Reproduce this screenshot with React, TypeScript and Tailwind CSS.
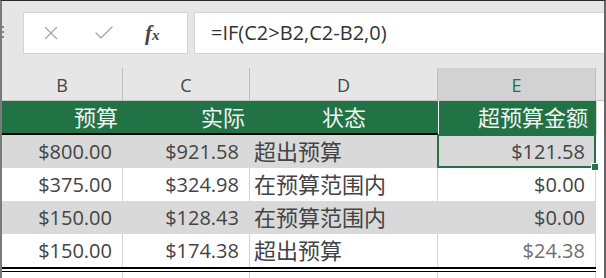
import React from 'react';
import { X, Check } from 'lucide-react';

type Row = { budget: string; actual: string; status: string; over: string };

const rows: Row[] = [
    { budget: '$800.00', actual: '$921.58', status: '超出预算', over: '$121.58' },
    { budget: '$375.00', actual: '$324.98', status: '在预算范围内', over: '$0.00' },
    { budget: '$150.00', actual: '$128.43', status: '在预算范围内', over: '$0.00' },
    { budget: '$150.00', actual: '$174.38', status: '超出预算', over: '$24.38' },
];

const font = "font-['Open_Sans','Noto_Sans_CJK_SC',sans-serif]";

export default function App() {
    return (
        <div className={`w-[606px] h-[278px] overflow-hidden bg-[#e6e6e6] border-t border-t-[#2b2b2b] border-l-2 border-l-[#7a7a7a] border-r-2 border-r-[#666] ${font}`}>
            {/* Formula bar */}
            <div className="relative h-[67px] flex items-start pt-[11px] pl-[21px] gap-[6px]">
                <div className="absolute left-0 top-[25px] flex flex-col gap-[3px]">
                    <span className="w-[2px] h-[2px] bg-[#8a8a8a]" />
                    <span className="w-[2px] h-[2px] bg-[#8a8a8a]" />
                    <span className="w-[2px] h-[2px] bg-[#8a8a8a]" />
                </div>
                <div className="w-[165px] h-[42px] bg-white border border-[#d4d4d4] flex items-center">
                    <X className="ml-[16px] w-[22px] h-[22px] text-[#a6a6a6]" strokeWidth={1.4} />
                    <Check className="ml-[30px] w-[24px] h-[24px] text-[#a6a6a6]" strokeWidth={1.4} />
                    <span className="ml-[29px] font-['Liberation_Serif',serif] italic font-bold text-[#444] text-[21px] leading-none">
                        f<span className="text-[15px]">x</span>
                    </span>
                </div>
                <div className="flex-1 h-[42px] bg-white border border-[#d4d4d4] border-r-0 flex items-center pl-[16px] text-[20px] text-[#333]">
                    =IF(C2&gt;B2,C2-B2,0)
                </div>
            </div>

            {/* Sheet */}
            <div className="grid grid-cols-[121px_127px_188px_158px_8px] bg-white">
                {/* column letters */}
                {['B', 'C', 'D'].map((c) => (
                    <div key={c} className="h-[33px] flex items-center justify-center pt-[2px] border-r border-r-[#bdbdbd] border-b border-b-[#c6c6c6] bg-[#e6e6e6] text-[18px] text-[#444]">
                        {c}
                    </div>
                ))}
                <div className="h-[33px] flex items-center justify-center pt-[2px] border-r border-r-[#bdbdbd] border-b border-b-[#c6c6c6] bg-[#d2d2d2] text-[18px] text-[#217346]">
                    E
                </div>
                <div className="h-[33px] bg-[#e6e6e6] border-b border-b-[#c6c6c6]" />

                {/* green header */}
                <div className="h-[34px] bg-[#217346] border-b-2 border-black flex items-center justify-end pr-[5px] text-[22px] text-[#f2f2f2]">预算</div>
                <div className="h-[34px] bg-[#217346] border-b-2 border-black flex items-center justify-end pr-[5px] text-[22px] text-[#f2f2f2]">实际</div>
                <div className="h-[34px] bg-[#217346] border-b-2 border-black flex items-center justify-center text-[22px] text-[#f2f2f2]">状态</div>
                <div className="h-[34px] bg-[#217346] border-l border-white flex items-center justify-end pr-[8px] pb-[2px] text-[22px] text-[#f2f2f2]">超预算金额</div>
                <div className="h-[34px] bg-white border-l border-[#d4d4d4]" />

                {/* data */}
                {rows.map((r, i) => {
                    const gray = i % 2 === 0;
                    const bg = gray ? 'bg-[#d9d9d9] border-[#d9d9d9]' : 'bg-white border-[#d4d4d4]';
                    return (
                        <React.Fragment key={i}>
                            <div className={`h-[33px] border-r flex items-center justify-end pr-[10px] text-[20px] text-[#444] ${bg}`}>{r.budget}</div>
                            <div className={`h-[33px] border-r flex items-center justify-end pr-[10px] text-[20px] text-[#444] ${bg}`}>{r.actual}</div>
                            <div className={`h-[33px] border-r flex items-center pl-[4px] text-[22px] text-[#444] ${bg}`}>{r.status}</div>
                            <div className={`relative h-[33px] border-r border-r-[#d4d4d4] flex items-center justify-end pr-[10px] text-[20px] ${bg} ${i === 3 ? 'text-[#6f6f6f]' : 'text-[#444]'}`}>
                                {r.over}
                                {i === 0 && (
                                    <div className="absolute -left-[1px] -top-[1px] right-[-1px] bottom-0 border-2 border-[#217346] z-10">
                                        <div className="absolute -right-[5px] -bottom-[5px] w-[8px] h-[8px] bg-[#217346] border border-white" />
                                    </div>
                                )}
                            </div>
                            <div className="h-[33px] bg-white" />
                        </React.Fragment>
                    );
                })}

                {/* double bottom rule */}
                <div className="col-span-4 h-[5px] border-t-2 border-b border-black bg-white" />
                <div className="h-[5px] bg-white" />

                {/* next row */}
                <div className="h-[10px] border-r border-[#d4d4d4]" />
                <div className="h-[10px] border-r border-[#d4d4d4]" />
                <div className="h-[10px] border-r border-[#d4d4d4]" />
                <div className="h-[10px] border-r border-[#d4d4d4]" />
                <div className="h-[10px]" />
            </div>
        </div>
    );
}
